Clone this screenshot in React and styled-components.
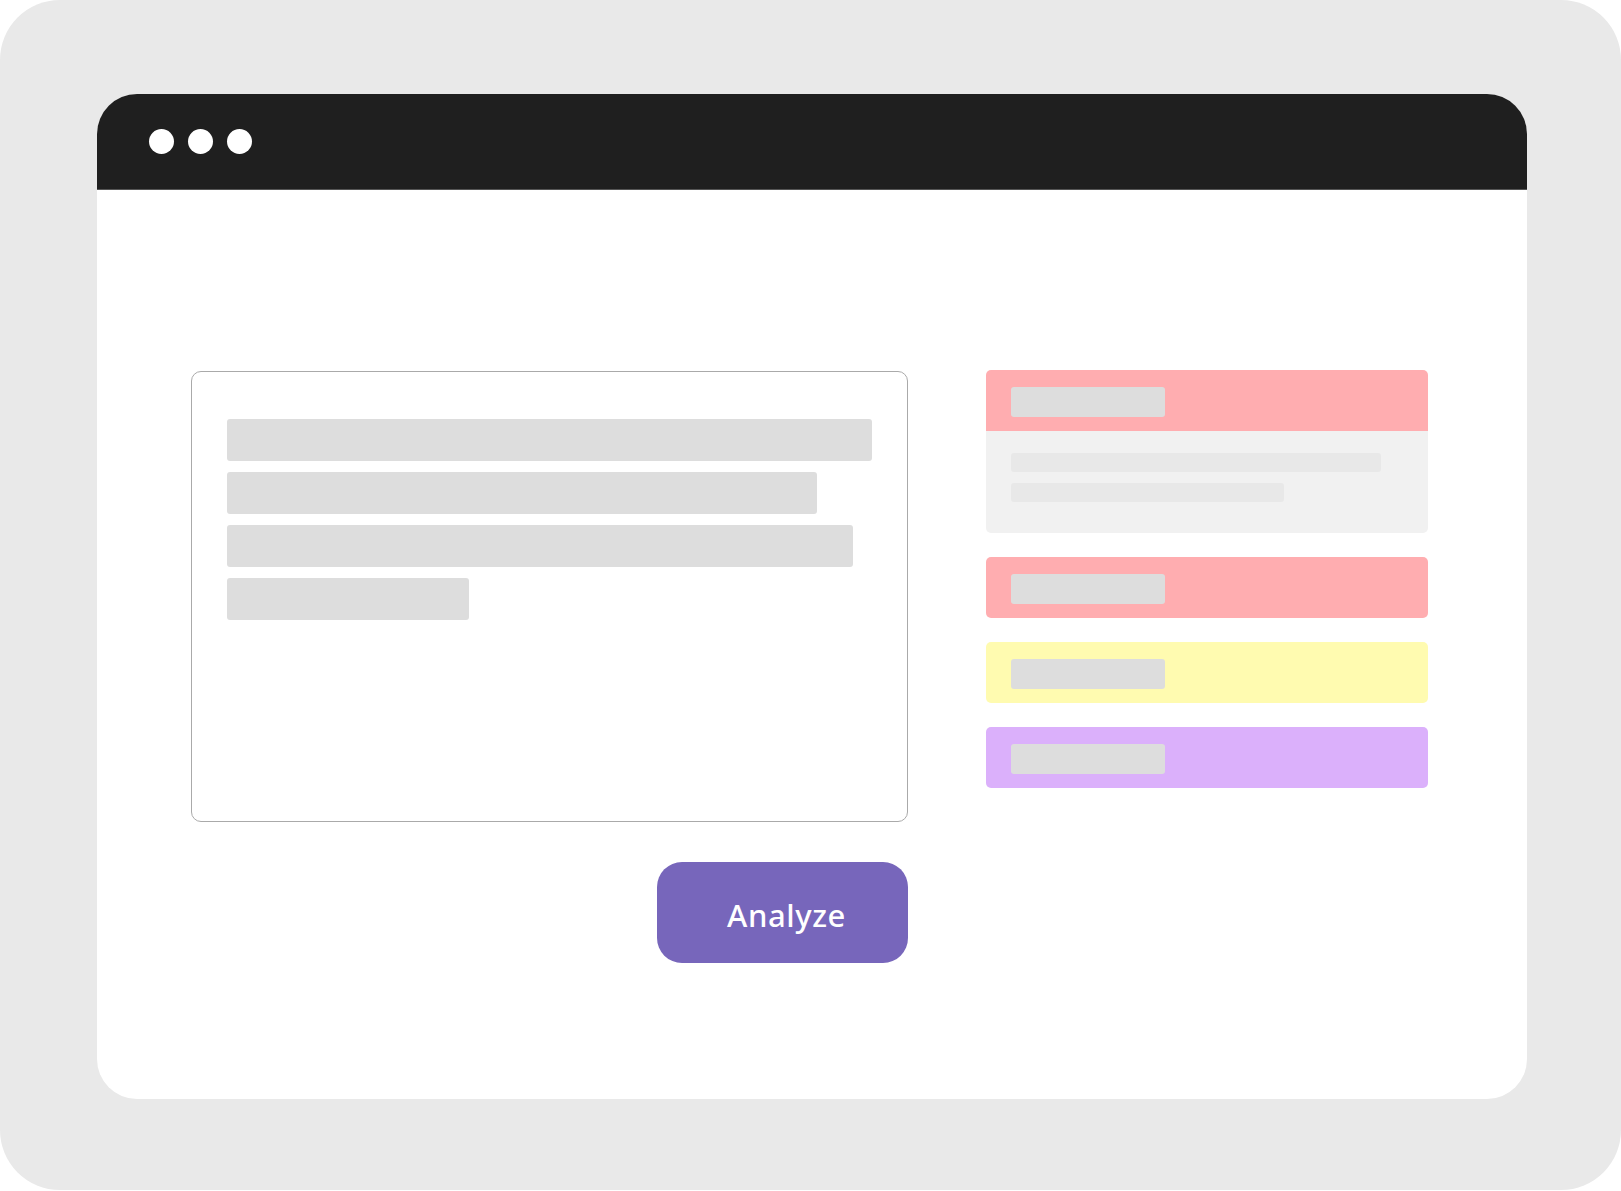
import styled, { createGlobalStyle } from "styled-components";

const GlobalStyle = createGlobalStyle`
  body {
    margin: 0;
    background: #ffffff;
    font-family: "Noto Sans", "Liberation Sans", sans-serif;
  }
`;

const lines = [645, 590, 626, 242];

const cards = [
  { color: "#ffadb0", details: [370, 273] },
  { color: "#ffadb0" },
  { color: "#fffbb0" },
  { color: "#dbb0fb" },
];

const App = () => {
  return (
    <>
      <GlobalStyle />
      <Backdrop>
        <Window>
          <TitleBar>
            <Dot />
            <Dot />
            <Dot />
          </TitleBar>
          <Content>
            <LeftColumn>
              <TextBox>
                {lines.map((width, i) => (
                  <TextLine key={i} $width={width} />
                ))}
              </TextBox>
              <AnalyzeButton>Analyze</AnalyzeButton>
            </LeftColumn>
            <ResultList>
              {cards.map((card, i) => (
                <ResultCard key={i}>
                  <CardHeader $color={card.color}>
                    <Label />
                  </CardHeader>
                  {card.details && (
                    <CardBody>
                      {card.details.map((width, j) => (
                        <DetailLine key={j} $width={width} />
                      ))}
                    </CardBody>
                  )}
                </ResultCard>
              ))}
            </ResultList>
          </Content>
        </Window>
      </Backdrop>
    </>
  );
};

export default App;

const Backdrop = styled.div`
  width: 1621px;
  height: 1190px;
  box-sizing: border-box;
  padding: 94px 94px 91px 97px;
  background: #e9e9e9;
  border-radius: 60px;
`;

const Window = styled.div`
  height: 100%;
  display: flex;
  flex-direction: column;
  background: #ffffff;
  border-radius: 40px;
  overflow: hidden;
`;

const TitleBar = styled.div`
  height: 96px;
  flex-shrink: 0;
  display: flex;
  align-items: center;
  gap: 14px;
  padding-left: 52px;
  background: #1f1f1f;
  border-bottom: 1px solid #555;
  box-sizing: border-box;
`;

const Dot = styled.span`
  width: 25px;
  height: 25px;
  border-radius: 50%;
  background: #ffffff;
`;

const Content = styled.div`
  display: grid;
  grid-template-columns: 717px 442px;
  column-gap: 78px;
  align-items: start;
  padding: 180px 0 0 94px;
`;

const LeftColumn = styled.div`
  display: flex;
  flex-direction: column;
  align-items: flex-end;
  gap: 40px;
  padding-top: 1px;
`;

const TextBox = styled.div`
  width: 100%;
  height: 451px;
  box-sizing: border-box;
  padding: 47px 35px;
  display: flex;
  flex-direction: column;
  gap: 11px;
  border: 1px solid #aaaaaa;
  border-radius: 10px;
`;

const TextLine = styled.div`
  width: ${(p) => p.$width}px;
  height: 42px;
  background: #dddddd;
  border-radius: 3px;
`;

const AnalyzeButton = styled.button`
  width: 251px;
  height: 101px;
  border: none;
  border-radius: 25px;
  background: #7766bb;
  color: #ffffff;
  font-family: "Noto Sans", "Liberation Sans", sans-serif;
  font-size: 31px;
  font-weight: 500;
  letter-spacing: 0.6px;
  padding: 5px 0 0 8px;
  cursor: pointer;
`;

const ResultList = styled.div`
  display: flex;
  flex-direction: column;
  gap: 24px;
`;

const ResultCard = styled.div`
  border-radius: 5px;
  overflow: hidden;
`;

const CardHeader = styled.div`
  height: 61px;
  box-sizing: border-box;
  padding: 17px 25px;
  background: ${(p) => p.$color};
`;

const Label = styled.div`
  width: 154px;
  height: 30px;
  background: #dddddd;
  border-radius: 3px;
`;

const CardBody = styled.div`
  height: 102px;
  box-sizing: border-box;
  padding: 22px 25px;
  display: flex;
  flex-direction: column;
  gap: 11px;
  background: #f1f1f1;
`;

const DetailLine = styled.div`
  width: ${(p) => p.$width}px;
  height: 19px;
  background: #e8e8e8;
  border-radius: 3px;
`;
